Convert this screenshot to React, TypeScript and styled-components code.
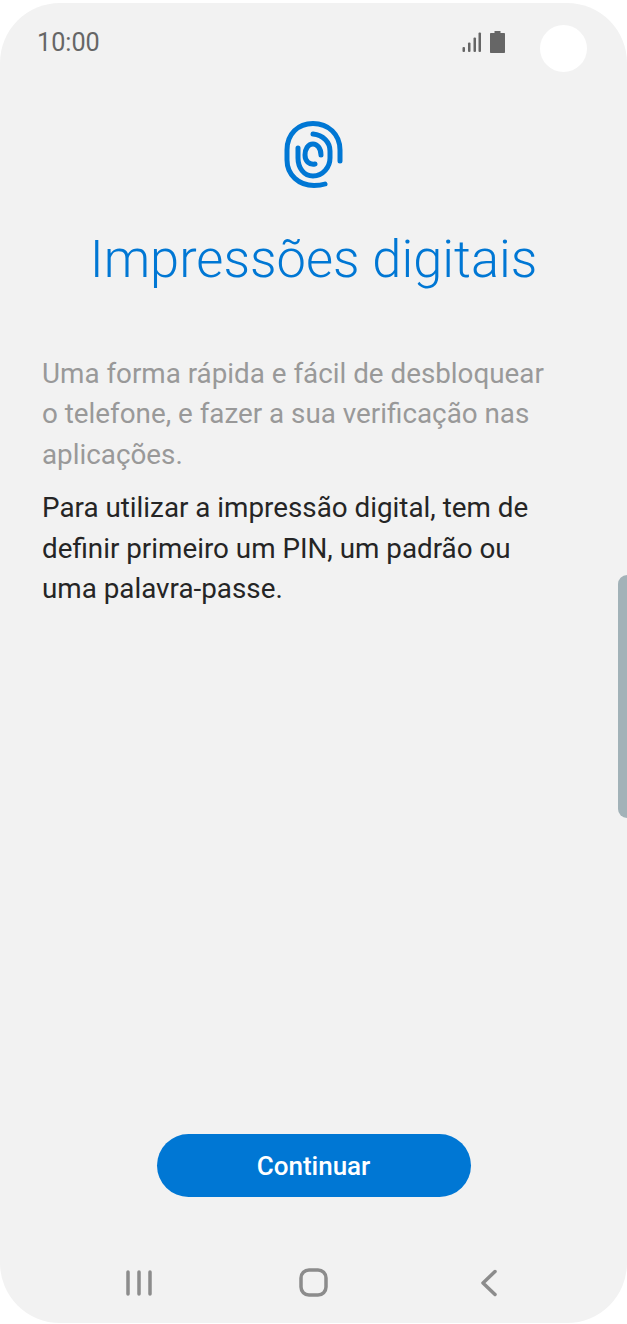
import React from 'react';
import styled, { createGlobalStyle } from 'styled-components';

const GlobalStyle = createGlobalStyle`
  html, body {
    margin: 0;
    padding: 0;
    background: #fff;
  }
  body {
    font-family: Roboto, "Liberation Sans", sans-serif;
  }
`;

const Phone = styled.div`
  position: relative;
  box-sizing: border-box;
  width: 627px;
  height: 1320px;
  margin-top: 3px;
  background: #f2f2f2;
  border-radius: 60px;
  overflow: hidden;
  display: flex;
  flex-direction: column;
`;

const StatusBar = styled.div`
  display: flex;
  align-items: center;
  justify-content: space-between;
  height: 40px;
  margin-top: 19px;
  padding: 0 122px 0 37px;
`;

const Time = styled.span`
  font-size: 25.2px;
  color: #666;
`;

const StatusIcons = styled.div`
  display: flex;
  align-items: center;
  gap: 8px;
`;

const Camera = styled.div`
  position: absolute;
  top: 22px;
  left: 540px;
  width: 47px;
  height: 47px;
  border-radius: 50%;
  background: #fff;
`;

const SideHandle = styled.div`
  position: absolute;
  top: 572px;
  right: 0;
  width: 9px;
  height: 243px;
  border-radius: 9px 0 0 9px;
  background: #a2b2b8;
`;

const Content = styled.main`
  flex: 1;
  display: flex;
  flex-direction: column;
  padding: 0 42px;
`;

const Hero = styled.div`
  display: flex;
  justify-content: center;
  margin-top: 58px;
`;

const Title = styled.h1`
  margin: 37px -20px 0;
  font-size: 52.4px;
  font-weight: 300;
  line-height: 68px;
  text-align: center;
  color: #0077d4;
`;

const Paragraph = styled.p<{ $muted?: boolean }>`
  margin: 0;
  font-size: 27.8px;
  line-height: 40.4px;
  white-space: nowrap;
  color: ${(p) => (p.$muted ? '#999' : '#252525')};
`;

const Texts = styled.div`
  display: flex;
  flex-direction: column;
  gap: 13px;
  margin-top: 61px;
`;

const Footer = styled.div`
  margin-top: auto;
  display: flex;
  justify-content: center;
  padding-bottom: 71px;
`;

const PrimaryButton = styled.button`
  width: 314px;
  height: 63px;
  border: none;
  border-radius: 32px;
  background: #0077d4;
  color: #fff;
  font-family: inherit;
  font-size: 26px;
  font-weight: 500;
`;

const NavBar = styled.nav`
  display: grid;
  grid-template-columns: repeat(3, 175px);
  justify-items: center;
  align-items: center;
  height: 30px;
  padding: 0 51px;
  margin-bottom: 25px;
`;

const FingerprintIcon = () => (
  <svg width="60" height="68" viewBox="0 0 60 68" fill="none" stroke="#0077d4" strokeWidth="5" strokeLinecap="round">
    <path d="M56 41V30C56 14 44 3.500 29 3.500C14 3.500 3 14 3 30V40C3 55 15 65.500 30 65.500C34 65.500 38 65 41 64" />
    <path d="M14 28V38C14 48 20 56 29 56C39 56 46 47 46 38V31C46 22 39 15 29 14" />
    <path d="M37 35C37 28 33 24 29 24C24 24 21 29 21 35C21 41 25 45 31 44" />
  </svg>
);

const SignalIcon = () => (
  <svg width="20" height="21" viewBox="0 0 20 21" fill="#666">
    <rect x="0.500" y="15" width="2.500" height="5" rx="1" />
    <rect x="6" y="10.500" width="2.500" height="9.500" rx="1" />
    <rect x="11.500" y="5.500" width="2.500" height="14.500" rx="1" />
    <rect x="16.500" y="0.500" width="2.500" height="19.500" rx="1" />
  </svg>
);

const BatteryIcon = () => (
  <svg width="15" height="22" viewBox="0 0 15 22" fill="#666">
    <path d="M4.500 0H10.500V2H14C14.600 2 15 2.400 15 3V21C15 21.600 14.600 22 14 22H1C.4 22 0 21.600 0 21V3C0 2.400 .4 2 1 2H4.500Z" />
  </svg>
);

const RecentsIcon = () => (
  <svg width="28" height="28" viewBox="0 0 28 28" stroke="#8c8c8c" strokeWidth="3.500" strokeLinecap="round">
    <path d="M3 3V25M14 3V25M25 3V25" />
  </svg>
);

const HomeIcon = () => (
  <svg width="30" height="30" viewBox="0 0 30 30" fill="none" stroke="#8c8c8c" strokeWidth="3.500">
    <rect x="2" y="2" width="25" height="25" rx="8" />
  </svg>
);

const BackIcon = () => (
  <svg width="18" height="28" viewBox="0 0 18 28" fill="none" stroke="#8c8c8c" strokeWidth="3.500" strokeLinecap="round" strokeLinejoin="round">
    <path d="M15 2.500L3 14L15 25.500" />
  </svg>
);

export default function App() {
  return (
    <>
      <GlobalStyle />
      <Phone>
        <StatusBar>
          <Time>10:00</Time>
          <StatusIcons>
            <SignalIcon />
            <BatteryIcon />
          </StatusIcons>
        </StatusBar>
        <Camera />
        <SideHandle />
        <Content>
          <Hero>
            <FingerprintIcon />
          </Hero>
          <Title>Impressões digitais</Title>
          <Texts>
            <Paragraph $muted>
              Uma forma rápida e fácil de desbloquear
              <br />o telefone, e fazer a sua verificação nas
              <br />aplicações.
            </Paragraph>
            <Paragraph>
              Para utilizar a impressão digital, tem de
              <br />definir primeiro um PIN, um padrão ou
              <br />uma palavra-passe.
            </Paragraph>
          </Texts>
          <Footer>
            <PrimaryButton>Continuar</PrimaryButton>
          </Footer>
        </Content>
        <NavBar>
          <RecentsIcon />
          <HomeIcon />
          <BackIcon />
        </NavBar>
      </Phone>
    </>
  );
}
